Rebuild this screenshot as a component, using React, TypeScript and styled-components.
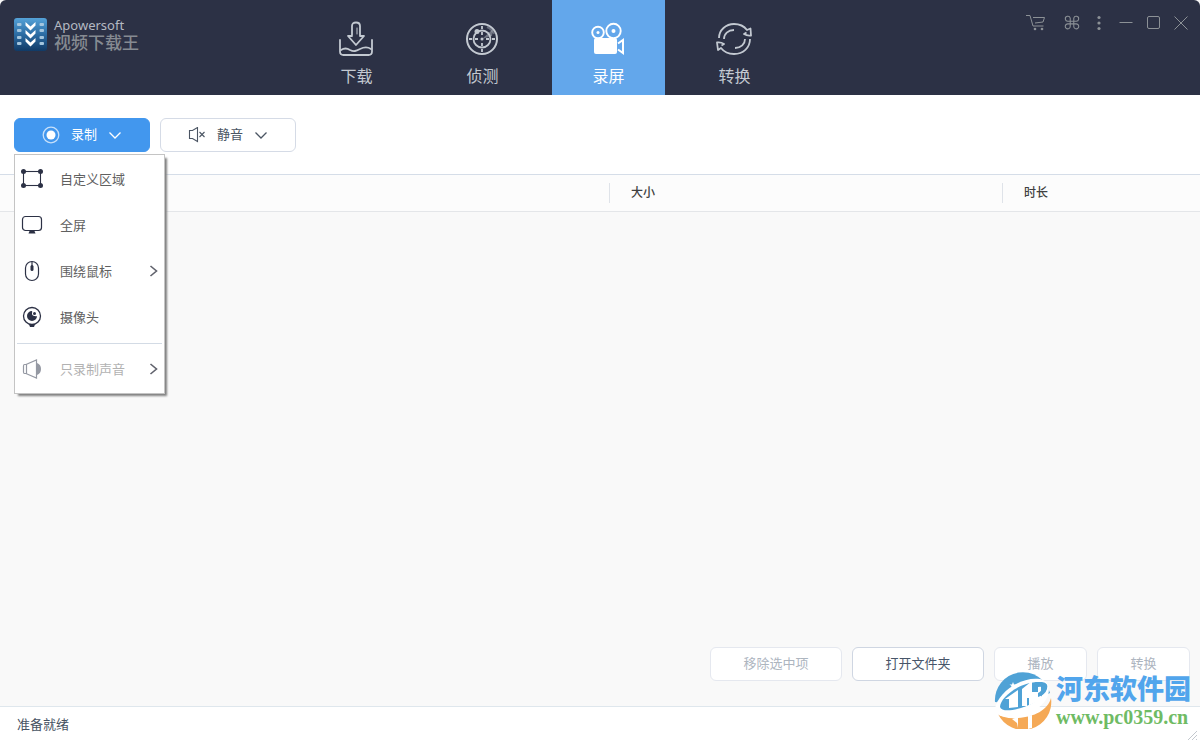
import React from 'react';
import styled, { createGlobalStyle, css } from 'styled-components';

const GlobalStyle = createGlobalStyle`
  * { box-sizing: border-box; }
  body {
    margin: 0;
    background: #fff;
    color: #4a5568;
    font-family: "Noto Sans", "Noto Sans CJK SC", sans-serif;
    font-size: 13px;
    line-height: 20px;
  }
  button {
    font: inherit;
    color: inherit;
    background: none;
    border: 0;
    padding: 0;
    cursor: pointer;
  }
  svg { display: block; flex: none; }
`;

const Window = styled.div`
  position: relative;
  min-height: 100vh;
  display: flex;
  flex-direction: column;
  background: #f9f9f9;
`;

const Header = styled.header`
  display: flex;
  height: 95px;
  background: #2c3145;
  border-radius: 6px 6px 0 0;
`;

const Brand = styled.div`
  flex: 0 0 300px;
  display: flex;
  gap: 7px;
  padding: 18px 0 0 14px;
`;

const BrandText = styled.div`
  display: flex;
  flex-direction: column;
`;

const BrandName = styled.span`
  font-size: 13px;
  line-height: 14px;
  color: #b4b9c2;
`;

const BrandProduct = styled.span`
  font-family: "Liberation Sans", "Noto Sans CJK SC", sans-serif;
  font-size: 17px;
  line-height: 24px;
  font-weight: 500;
  color: #868b92;
`;

const Tabs = styled.nav`
  flex: 1;
  display: flex;
  gap: 13px;
`;

const Tab = styled.button<{ $active?: boolean }>`
  width: 113px;
  height: 95px;
  display: flex;
  flex-direction: column;
  align-items: center;
  gap: 6px;
  padding-top: 20px;
  font-size: 16px;
  line-height: 24px;
  color: #c3c9d1;
  ${p => p.$active && css`
    background: #63a7eb;
    color: #fff;
  `}
`;

const WindowTools = styled.div`
  display: flex;
  align-items: flex-start;
  padding: 14px 7px 0 0;
`;

const ToolButton = styled.button<{ $wide?: boolean }>`
  display: flex;
  justify-content: center;
  width: ${p => (p.$wide ? 45 : 27)}px;
  color: #8c9196;
`;

const Toolbar = styled.div`
  display: flex;
  gap: 10px;
  padding: 23px 14px 22px;
  background: #fff;
`;

const MenuAnchor = styled.div`
  position: relative;
`;

const ActionButton = styled.button<{ $primary?: boolean }>`
  display: flex;
  align-items: center;
  justify-content: center;
  gap: 11px;
  width: 136px;
  height: 34px;
  border-radius: 6px;
  border: 1px solid #d5dbe6;
  background: #fff;
  color: #4b5563;
  ${p => p.$primary && css`
    border-color: #4297ee;
    background: #4297ee;
    color: #fff;
  `}
`;

const ActionLabel = styled.span`
  padding-bottom: 2px;
`;

const Menu = styled.div`
  position: absolute;
  top: 36px;
  left: 0;
  z-index: 2;
  width: 151px;
  padding: 1px 2px;
  border: 1px solid #c4c4c4;
  background: #fff;
  box-shadow: 3px 3px 2px -1px #808080;
`;

const MenuItem = styled.button<{ $muted?: boolean }>`
  display: flex;
  align-items: center;
  width: 100%;
  height: 46px;
  padding: 0 4px 0 3px;
  color: ${p => (p.$muted ? '#b2b2b2' : '#606060')};
  text-align: left;
`;

const MenuLabel = styled.span`
  flex: 1;
  padding: 0 0 1px 16px;
`;

const MenuLine = styled.hr`
  margin: 3px 0 2px;
  border: 0;
  border-top: 1px solid #d3dbe5;
`;

const Content = styled.main`
  flex: 1;
  display: flex;
  flex-direction: column;
`;

const RecordTable = styled.table`
  width: 100%;
  table-layout: fixed;
  border-collapse: collapse;
  background: #fcfcfc;
  border-top: 1px solid #d5dde8;
  border-bottom: 1px solid #e4e6e9;
`;

const Column = styled.th<{ $width?: number }>`
  width: ${p => (p.$width ? `${p.$width}px` : 'auto')};
  height: 37px;
  padding: 0;
  text-align: left;
  font-size: 12px;
  font-weight: 500;
  color: #404040;
`;

const ColumnLabel = styled.span`
  display: block;
  padding-left: 21px;
  border-left: 1px solid #dfe3e9;
`;

const FileActions = styled.div`
  display: flex;
  justify-content: flex-end;
  gap: 10px;
  margin-top: auto;
  padding: 0 10px 25px;
`;

const FileButton = styled.button<{ $wide?: boolean }>`
  width: ${p => (p.$wide ? 132 : 93)}px;
  height: 34px;
  padding-bottom: 2px;
  border: 1px solid #cfd6e2;
  border-radius: 6px;
  background: #fff;
  color: #475569;
  &:disabled {
    border-color: #e5e8ef;
    color: #adb5bf;
  }
`;

const StatusBar = styled.footer`
  display: flex;
  align-items: center;
  justify-content: space-between;
  height: 36px;
  padding-left: 17px;
  border-top: 1px solid #dfe7ed;
  background: #fff;
  color: #475363;
`;

const StatusText = styled.span`
  padding-bottom: 2px;
`;

const Grip = styled.svg`
  align-self: flex-end;
`;

const SiteMark = styled.div`
  position: absolute;
  right: 9px;
  bottom: 13px;
  z-index: 3;
  display: flex;
  gap: 4px;
  pointer-events: none;
`;

const SiteText = styled.div`
  display: flex;
  flex-direction: column;
  padding-top: 2px;
`;

const SiteName = styled.span`
  font-size: 27px;
  line-height: 32px;
  font-weight: 900;
  color: #51a5ec;
`;

const SiteAddress = styled.span`
  font-family: "Liberation Serif", serif;
  font-size: 20px;
  line-height: 24px;
  font-weight: 700;
  color: #6fbb64;
`;

const LogoIcon = () => (
  <svg width="33" height="33" viewBox="0 0 33 33">
    <defs>
      <linearGradient id="logoFill" x1="0" y1="0" x2="0" y2="1">
        <stop offset="0" stopColor="#55a2d8" />
        <stop offset="0.5" stopColor="#2c6ca3" />
        <stop offset="1" stopColor="#113a66" />
      </linearGradient>
    </defs>
    <rect width="33" height="33" rx="3" fill="url(#logoFill)" />
    {[5, 11, 18, 24].map(y => (
      <g key={y} fill="#a5c6de">
        <rect x="3" y={y} width="4.500" height="3" rx="1" />
        <rect x="25.500" y={y} width="4.500" height="3" rx="1" />
      </g>
    ))}
    {[4, 12, 20].map(y => (
      <path key={y} d={`M11.500 ${y}l5 4.500 5-4.500v3.500l-5 5-5-5z`} fill="#fff" />
    ))}
  </svg>
);

const DownloadIcon = () => (
  <svg width="36" height="38" viewBox="0 0 36 38" fill="none" stroke="currentColor" strokeWidth="1.800" strokeLinejoin="round" strokeLinecap="round">
    <path d="M1 20v11.500q0 3.500 3.500 3.500h25q3.500 0 3.500-3.500V20" />
    <path d="M2 30c3-2 6-2 9 0 4 2 6 1 10-1s8-2 11 0" />
    <path d="M13 15V6q0-3.500 4-3.500T21 6v10h4L17 25 9 16h4" />
    <path d="M18 8v6" strokeWidth="1" />
  </svg>
);

const DetectIcon = () => (
  <svg width="36" height="38" viewBox="1 0 36 38" fill="none" stroke="currentColor">
    <circle cx="18" cy="19" r="15" strokeWidth="2" />
    <circle cx="18" cy="19" r="8.500" strokeWidth="1.800" />
    <path d="M18 6v3M18 29v3M5 19h3M28 19h3M18 12v3M18 23v3M11 19h3M22 19h3" strokeWidth="1.800" />
    <path d="M18 19l11-10-1 7z" fill="currentColor" stroke="none" opacity="0.450" />
    <path d="M23 7q5 2 7 7" opacity="0.400" strokeWidth="2" />
    <circle cx="18" cy="19" r="1.500" fill="currentColor" stroke="none" />
    <circle cx="13" cy="11.500" r="2.500" fill="currentColor" stroke="none" />
  </svg>
);

const CameraIcon = () => (
  <svg width="36" height="38" viewBox="1 0 36 38" fill="none" stroke="currentColor">
    <circle cx="8" cy="12.500" r="5.800" strokeWidth="1.900" />
    <circle cx="23.500" cy="11" r="7.200" strokeWidth="1.900" />
    <circle cx="8" cy="12.500" r="1.500" fill="currentColor" stroke="none" />
    <circle cx="23.500" cy="11" r="2" fill="currentColor" stroke="none" />
    <rect x="4" y="18" width="23" height="16" rx="2" fill="currentColor" stroke="none" />
    <path d="M28 23.500l5-3.500v13l-5-3.500" strokeWidth="2" />
  </svg>
);

const ConvertIcon = () => (
  <svg width="38" height="38" viewBox="1 0 38 38" fill="none" stroke="currentColor" strokeWidth="1.800" strokeLinejoin="round">
    <path d="M4 18C4 10 11 4 19 4c6 0 10 2 13 6l3.500-1.500.5 7q-4 .5-7-1.500l2.500-1.500" />
    <path d="M35 19c0 9-7 15-16 15-6 0-10-2-13-6l-3 2-1-7.500q4-.5 7 1.500l-2.500 1.500" />
    <path d="M9 19c0-5 4-9 10-9M30 19c0 5-4 9-10 9" />
  </svg>
);

const CartIcon = () => (
  <svg width="20" height="18" viewBox="0 0 20 18" fill="none" stroke="currentColor">
    <path d="M0 1.500h4l3 10.500h10.500M7 3.500h11.500l-1.500 4.500L9 9" />
    <circle cx="9" cy="15" r="1.300" fill="currentColor" stroke="none" />
    <circle cx="16" cy="15" r="1.300" fill="currentColor" stroke="none" />
  </svg>
);

const CommandIcon = () => (
  <svg width="16" height="18" viewBox="0 0 18 20" fill="none" stroke="currentColor" strokeWidth="1.200">
    <path d="M7 8V4.500A2.800 2.800 0 1 0 4.500 8h9A2.800 2.800 0 1 0 11 4.500v9a2.800 2.800 0 1 0 2.500-2.500h-9A2.800 2.800 0 1 0 7 13.500z" />
  </svg>
);

const MoreIcon = () => (
  <svg width="18" height="18" viewBox="0 0 18 18" fill="currentColor">
    {[3.5, 9, 14.5].map(y => <circle key={y} cx="9" cy={y} r="1.600" />)}
  </svg>
);

const MinimizeIcon = () => (
  <svg width="18" height="18" viewBox="0 0 18 18" stroke="currentColor"><path d="M2.500 8.500h13" /></svg>
);

const MaximizeIcon = () => (
  <svg width="18" height="18" viewBox="0 0 18 18" fill="none" stroke="currentColor">
    <rect x="3.500" y="2.500" width="12" height="12" rx="1.500" />
  </svg>
);

const CloseIcon = () => (
  <svg width="18" height="18" viewBox="0 0 18 18" stroke="currentColor"><path d="M3.500 2.500l13 13M16.500 2.500l-13 13" /></svg>
);

const RecordDot = () => (
  <svg width="18" height="18" viewBox="0 0 18 18">
    <circle cx="9" cy="9" r="7.800" fill="none" stroke="#c7e0fa" strokeWidth="1.300" />
    <circle cx="9" cy="9" r="4.500" fill="#fff" />
  </svg>
);

const MuteIcon = () => (
  <svg width="18" height="16" viewBox="0 0 18 16" fill="none" stroke="currentColor" strokeWidth="1.100">
    <path d="M1.500 3.500h3l5-3v14l-5-3h-3z" />
    <path d="M11.500 5l5 5M16.500 5l-5 5" />
  </svg>
);

const ChevronDown = () => (
  <svg width="14" height="8" viewBox="0 0 14 8" fill="none" stroke="currentColor" strokeWidth="1.300">
    <path d="M1.500 1.500L7 7l5.500-5.500" />
  </svg>
);

const ChevronRight = () => (
  <svg width="9" height="12" viewBox="0 0 9 12" fill="none" stroke="#60626c" strokeWidth="1.600">
    <path d="M1.500 1L7.500 6l-6 5" />
  </svg>
);

const RegionIcon = () => (
  <svg width="24" height="22" viewBox="0 0 24 22" fill="#2c3145">
    <rect x="3.500" y="3.500" width="17" height="14" fill="none" stroke="#2c3145" strokeWidth="1.100" />
    <circle cx="3.500" cy="3.500" r="2.500" /><circle cx="20.500" cy="3.500" r="2.500" />
    <circle cx="3.500" cy="17.500" r="2.500" /><circle cx="20.500" cy="17.500" r="2.500" />
  </svg>
);

const ScreenIcon = () => (
  <svg width="24" height="22" viewBox="0 0 24 22" fill="none" stroke="#2c3145" strokeWidth="1.200">
    <rect x="2.500" y="2.500" width="19" height="14" rx="3" />
    <path d="M9.500 17h5l1 2.500h-7z" fill="#2c3145" stroke="none" />
  </svg>
);

const MouseIcon = () => (
  <svg width="24" height="22" viewBox="0 0 24 22" fill="none" stroke="#2c3145" strokeWidth="1.200">
    <rect x="5.500" y="1.500" width="13" height="19" rx="6.500" />
    <rect x="10.500" y="5" width="3" height="6" rx="1.500" fill="#2c3145" stroke="none" />
    <path d="M12 1.500V6" />
  </svg>
);

const WebcamIcon = () => (
  <svg width="24" height="22" viewBox="0 0 24 22" fill="none" stroke="#2c3145" strokeWidth="1.300">
    <circle cx="12" cy="10" r="8.500" />
    <path d="M12 5a5 5 0 1 0 5 5q-1 .5-2 0a2.500 2.500 0 0 1-3-3q.5-1 0-2z" fill="#2c3145" stroke="none" />
    <circle cx="14.500" cy="7.500" r="1.500" fill="#2c3145" stroke="none" />
    <path d="M9 18.500h6l-1 2.500h-4z" fill="#2c3145" stroke="none" />
  </svg>
);

const SpeakerIcon = () => (
  <svg width="24" height="22" viewBox="0 0 24 22" fill="none" stroke="#9599a3" strokeWidth="1.200">
    <path d="M6 6.500l10.500-4.500v18L6 15.500H4.500Q3.500 15.500 3.500 14V8q0-1.500 1-1.500zM6.500 6.500v9" />
    <path d="M17 5q4 1.500 4 6t-4 6z" fill="#9599a3" stroke="none" />
  </svg>
);

const SiteLogo = () => (
  <svg width="58" height="58" viewBox="0 0 58 58">
    <path d="M1 31A28 28 0 0 1 56 22L30 34z" fill="#4fa2d6" />
    <path d="M57 27C54 39 40 46 24 47 15 48 8 46 4 43A28 28 0 0 0 57 27z" fill="#f5a956" />
    <path d="M1 38C3 22 27 5 46 8c14 3 11 22-5 31C25 47 2 50 1 38z" fill="#fff" />
    <path d="M6 36C6 26 26 11 45 11c9 1 7 13-4 20C29 38 8 43 6 36z" fill="#4fa2d6" />
    <path d="M11 28l13-9v17l-9 1V28zM28 18l10-8v11h6V11l3 0v18l-11 5h-1v-7h-2v8h-5z" fill="#fff" />
    <path d="M41 11h7q7 1 5 7t-9 8v-4q4-2 4-5 0-2-4-1v-2z" fill="#4fa2d6" />
    <path d="M18 48l6-2v11l-1-5zM34 45l4-1v13l-4 1z" fill="#fff" />
    <path d="M19 11l1 2.500h2.500l-2 1.500.5 2.500-2-1.500-2 1.500.5-2.500-2-1.500H18z" fill="#fff" />
  </svg>
);

const tabs = [
  { label: '下载', icon: <DownloadIcon /> },
  { label: '侦测', icon: <DetectIcon /> },
  { label: '录屏', icon: <CameraIcon />, active: true },
  { label: '转换', icon: <ConvertIcon /> },
];

const menuItems = [
  { label: '自定义区域', icon: <RegionIcon /> },
  { label: '全屏', icon: <ScreenIcon /> },
  { label: '围绕鼠标', icon: <MouseIcon />, more: true },
  { label: '摄像头', icon: <WebcamIcon /> },
];

export default function App() {
  return (
    <Window>
      <GlobalStyle />
      <Header>
        <Brand>
          <LogoIcon />
          <BrandText>
            <BrandName>Apowersoft</BrandName>
            <BrandProduct>视频下载王</BrandProduct>
          </BrandText>
        </Brand>
        <Tabs>
          {tabs.map(t => (
            <Tab key={t.label} $active={t.active}>
              {t.icon}
              {t.label}
            </Tab>
          ))}
        </Tabs>
        <WindowTools>
          <ToolButton $wide><CartIcon /></ToolButton>
          <ToolButton><CommandIcon /></ToolButton>
          <ToolButton><MoreIcon /></ToolButton>
          <ToolButton><MinimizeIcon /></ToolButton>
          <ToolButton><MaximizeIcon /></ToolButton>
          <ToolButton><CloseIcon /></ToolButton>
        </WindowTools>
      </Header>

      <Toolbar>
        <MenuAnchor>
          <ActionButton $primary>
            <RecordDot />
            <ActionLabel>录制</ActionLabel>
            <ChevronDown />
          </ActionButton>
          <Menu>
            {menuItems.map(m => (
              <MenuItem key={m.label}>
                {m.icon}
                <MenuLabel>{m.label}</MenuLabel>
                {m.more && <ChevronRight />}
              </MenuItem>
            ))}
            <MenuLine />
            <MenuItem $muted>
              <SpeakerIcon />
              <MenuLabel>只录制声音</MenuLabel>
              <ChevronRight />
            </MenuItem>
          </Menu>
        </MenuAnchor>
        <ActionButton>
          <MuteIcon />
          <ActionLabel>静音</ActionLabel>
          <ChevronDown />
        </ActionButton>
      </Toolbar>

      <Content>
        <RecordTable>
          <thead>
            <tr>
              <Column />
              <Column $width={393}><ColumnLabel>大小</ColumnLabel></Column>
              <Column $width={198}><ColumnLabel>时长</ColumnLabel></Column>
            </tr>
          </thead>
        </RecordTable>
        <FileActions>
          <FileButton $wide disabled>移除选中项</FileButton>
          <FileButton $wide>打开文件夹</FileButton>
          <FileButton disabled>播放</FileButton>
          <FileButton disabled>转换</FileButton>
        </FileActions>
      </Content>

      <StatusBar>
        <StatusText>准备就绪</StatusText>
        <Grip width="14" height="14" viewBox="0 0 14 14" stroke="#c3c8ce">
          <path d="M2 12l9-9M6 12l5-5M10 12l1-1" />
        </Grip>
      </StatusBar>

      <SiteMark>
        <SiteLogo />
        <SiteText>
          <SiteName>河东软件园</SiteName>
          <SiteAddress>www.pc0359.cn</SiteAddress>
        </SiteText>
      </SiteMark>
    </Window>
  );
}
